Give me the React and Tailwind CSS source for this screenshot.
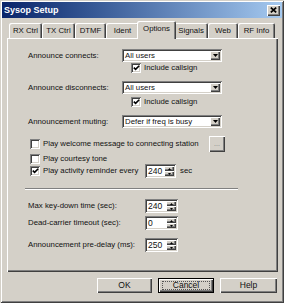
import React from 'react';

const raised = 'shadow-[inset_1px_1px_#ffffff,inset_-1px_-1px_#404040,inset_-2px_-2px_#808080]';
const sunken = 'shadow-[inset_1px_1px_#808080,inset_-1px_-1px_#ffffff,inset_2px_2px_#404040,inset_-2px_-2px_#d4d0c8]';

function Dropdown({ text }) {
  return (
    <div className={`h-[13px] w-[100px] bg-white ${sunken} flex items-center justify-between pl-[3px] pr-[2px]`}>
      <span className="leading-none">{text}</span>
      <div className={`w-[10px] h-[9px] bg-[#d4d0c8] ${raised} flex items-center justify-center`}>
        <svg width="5" height="3" viewBox="0 0 5 3">
          <path d="M0 0H5L2.5 3Z" fill="#000" />
        </svg>
      </div>
    </div>
  );
}

function Check({ checked }) {
  return (
    <div className={`w-[10px] h-[10px] shrink-0 bg-white ${sunken} flex items-center justify-center`}>
      {checked && (
        <svg width="7" height="6" viewBox="0 0 7 6">
          <path d="M0.8 2.6L2.6 4.4L6.2 0.8" stroke="#000" strokeWidth="1.6" fill="none" />
        </svg>
      )}
    </div>
  );
}

function Spin({ value, w }) {
  return (
    <div className={`h-[14px] ${w} bg-white ${sunken} flex items-center justify-between pl-[3px] pr-[2px]`}>
      <span className="leading-none text-[8.5px]">{value}</span>
      <div className="flex flex-col h-[10px] w-[10px]">
        <div className={`flex-1 bg-[#d4d0c8] ${raised} flex items-center justify-center`}>
          <svg width="3" height="2" viewBox="0 0 3 2"><path d="M1.5 0L3 2H0Z" fill="#000" /></svg>
        </div>
        <div className={`flex-1 bg-[#d4d0c8] ${raised} flex items-center justify-center`}>
          <svg width="3" height="2" viewBox="0 0 3 2"><path d="M0 0H3L1.5 2Z" fill="#000" /></svg>
        </div>
      </div>
    </div>
  );
}

function Tab({ label, w, active }) {
  if (active) {
    return (
      <div
        className={`${w} h-[18px] -mx-[2px] -mb-px relative z-10 bg-[#d4d0c8] rounded-t-[2px] shadow-[inset_1px_1px_#ffffff,inset_-1px_0_#404040,inset_-2px_0_#808080] flex items-center justify-center pb-[2px]`}
      >
        {label}
      </div>
    );
  }
  return (
    <div
      className={`${w} h-[15px] bg-[#d4d0c8] rounded-t-[2px] shadow-[inset_1px_1px_#ffffff,inset_-1px_0_#404040,inset_-2px_0_#808080] flex items-center justify-center`}
    >
      {label}
    </div>
  );
}

export default function App() {
  return (
    <div
      className="w-[284px] h-[303px] bg-[#d4d0c8] text-[#111] text-[7.8px] flex flex-col p-[2px] shadow-[inset_1px_1px_#d4d0c8,inset_-1px_-1px_#404040,inset_2px_2px_#ffffff,inset_-2px_-2px_#808080]"
      style={{ fontFamily: '"Liberation Sans", Arial, sans-serif' }}
    >
      {/* title bar */}
      <div className="h-[16px] bg-gradient-to-r from-[#0a246a] to-[#a6caf0] flex items-center justify-between pl-[2px] pr-[2px]">
        <span className="text-white font-bold text-[9px] leading-none">Sysop Setup</span>
        <div className={`w-[13px] h-[11px] bg-[#d4d0c8] ${raised} flex items-center justify-center`}>
          <svg width="7" height="6" viewBox="0 0 7 6">
            <path d="M0.8 0.6L6.2 5.4M6.2 0.6L0.8 5.4" stroke="#000" strokeWidth="1.7" />
          </svg>
        </div>
      </div>

      {/* tabs */}
      <div className="flex items-end h-[18px] mt-[2px] pl-[7px]">
        <Tab label="RX Ctrl" w="w-[33px]" />
        <Tab label="TX Ctrl" w="w-[33px]" />
        <Tab label="DTMF" w="w-[31px]" />
        <Tab label="Ident" w="w-[33px]" />
        <Tab label="Options" w="w-[39px]" active />
        <Tab label="Signals" w="w-[34px]" />
        <Tab label="Web" w="w-[30px]" />
        <Tab label="RF Info" w="w-[37px]" />
      </div>

      {/* panel */}
      <div className="ml-[5px] mr-[4px] h-[234px] flex flex-col shadow-[inset_1px_1px_#ffffff,inset_-1px_-1px_#404040,inset_-2px_-2px_#808080]">
        <div className="flex items-center h-[13px] mt-[11px] pl-[21px]">
          <div className="w-[94px]">Announce connects:</div>
          <Dropdown text="All users" />
        </div>
        <div className="flex items-center gap-[3px] h-[10px] mt-[1px] pl-[124px]">
          <Check checked />
          <span>Include callsign</span>
        </div>

        <div className="flex items-center h-[13px] mt-[8px] pl-[21px]">
          <div className="w-[94px]">Announce disconnects:</div>
          <Dropdown text="All users" />
        </div>
        <div className="flex items-center gap-[3px] h-[10px] mt-[3px] pl-[124px]">
          <Check checked />
          <span>Include callsign</span>
        </div>

        <div className="flex items-center h-[13px] mt-[8px] pl-[21px]">
          <div className="w-[94px]">Announcement muting:</div>
          <Dropdown text="Defer if freq is busy" />
        </div>

        <div className="flex items-center h-[16px] mt-[8px] pl-[23px]">
          <Check />
          <span className="ml-[3px] w-[166px]">Play welcome message to connecting station</span>
          <div className={`w-[16px] h-[16px] bg-[#d4d0c8] ${raised} flex items-center justify-center text-[#808080] text-[7px] leading-none pb-[1px]`}>
            ...
          </div>
        </div>
        <div className="flex items-center gap-[3px] h-[10px] mt-[2px] pl-[23px]">
          <Check />
          <span>Play courtesy tone</span>
        </div>
        <div className="flex items-center h-[14px] pl-[23px]">
          <Check checked />
          <span className="ml-[3px] w-[102px]">Play activity reminder every</span>
          <Spin value="240" w="w-[31px]" />
          <span className="ml-[4px]">sec</span>
        </div>

        <div className="ml-[18px] w-[213px] mt-[10px] border-t border-t-[#808080] border-b border-b-white" />

        <div className="flex items-center h-[14px] mt-[9px] pl-[21px]">
          <div className="w-[117px]">Max key-down time (sec):</div>
          <Spin value="240" w="w-[33px]" />
        </div>
        <div className="flex items-center h-[14px] mt-[3px] pl-[21px]">
          <div className="w-[117px]">Dead-carrier timeout (sec):</div>
          <Spin value="0" w="w-[33px]" />
        </div>
        <div className="flex items-center h-[14px] mt-[8px] pl-[21px]">
          <div className="w-[117px]">Announcement pre-delay (ms):</div>
          <Spin value="250" w="w-[33px]" />
        </div>
      </div>

      {/* buttons */}
      <div className="flex justify-end mt-[6px] pr-[5px] gap-[6px] text-[8.5px]">
        <div className={`w-[55px] h-[15px] ${raised} flex items-center justify-center`}>OK</div>
        <div className={`relative w-[56px] h-[15px] border border-black ${raised} flex items-center justify-center`}>
          Cancel
          <div className="absolute inset-x-[3px] inset-y-[2px] border border-dotted border-[#555]" />
        </div>
        <div className={`w-[57px] h-[15px] ${raised} flex items-center justify-center`}>Help</div>
      </div>
    </div>
  );
}
